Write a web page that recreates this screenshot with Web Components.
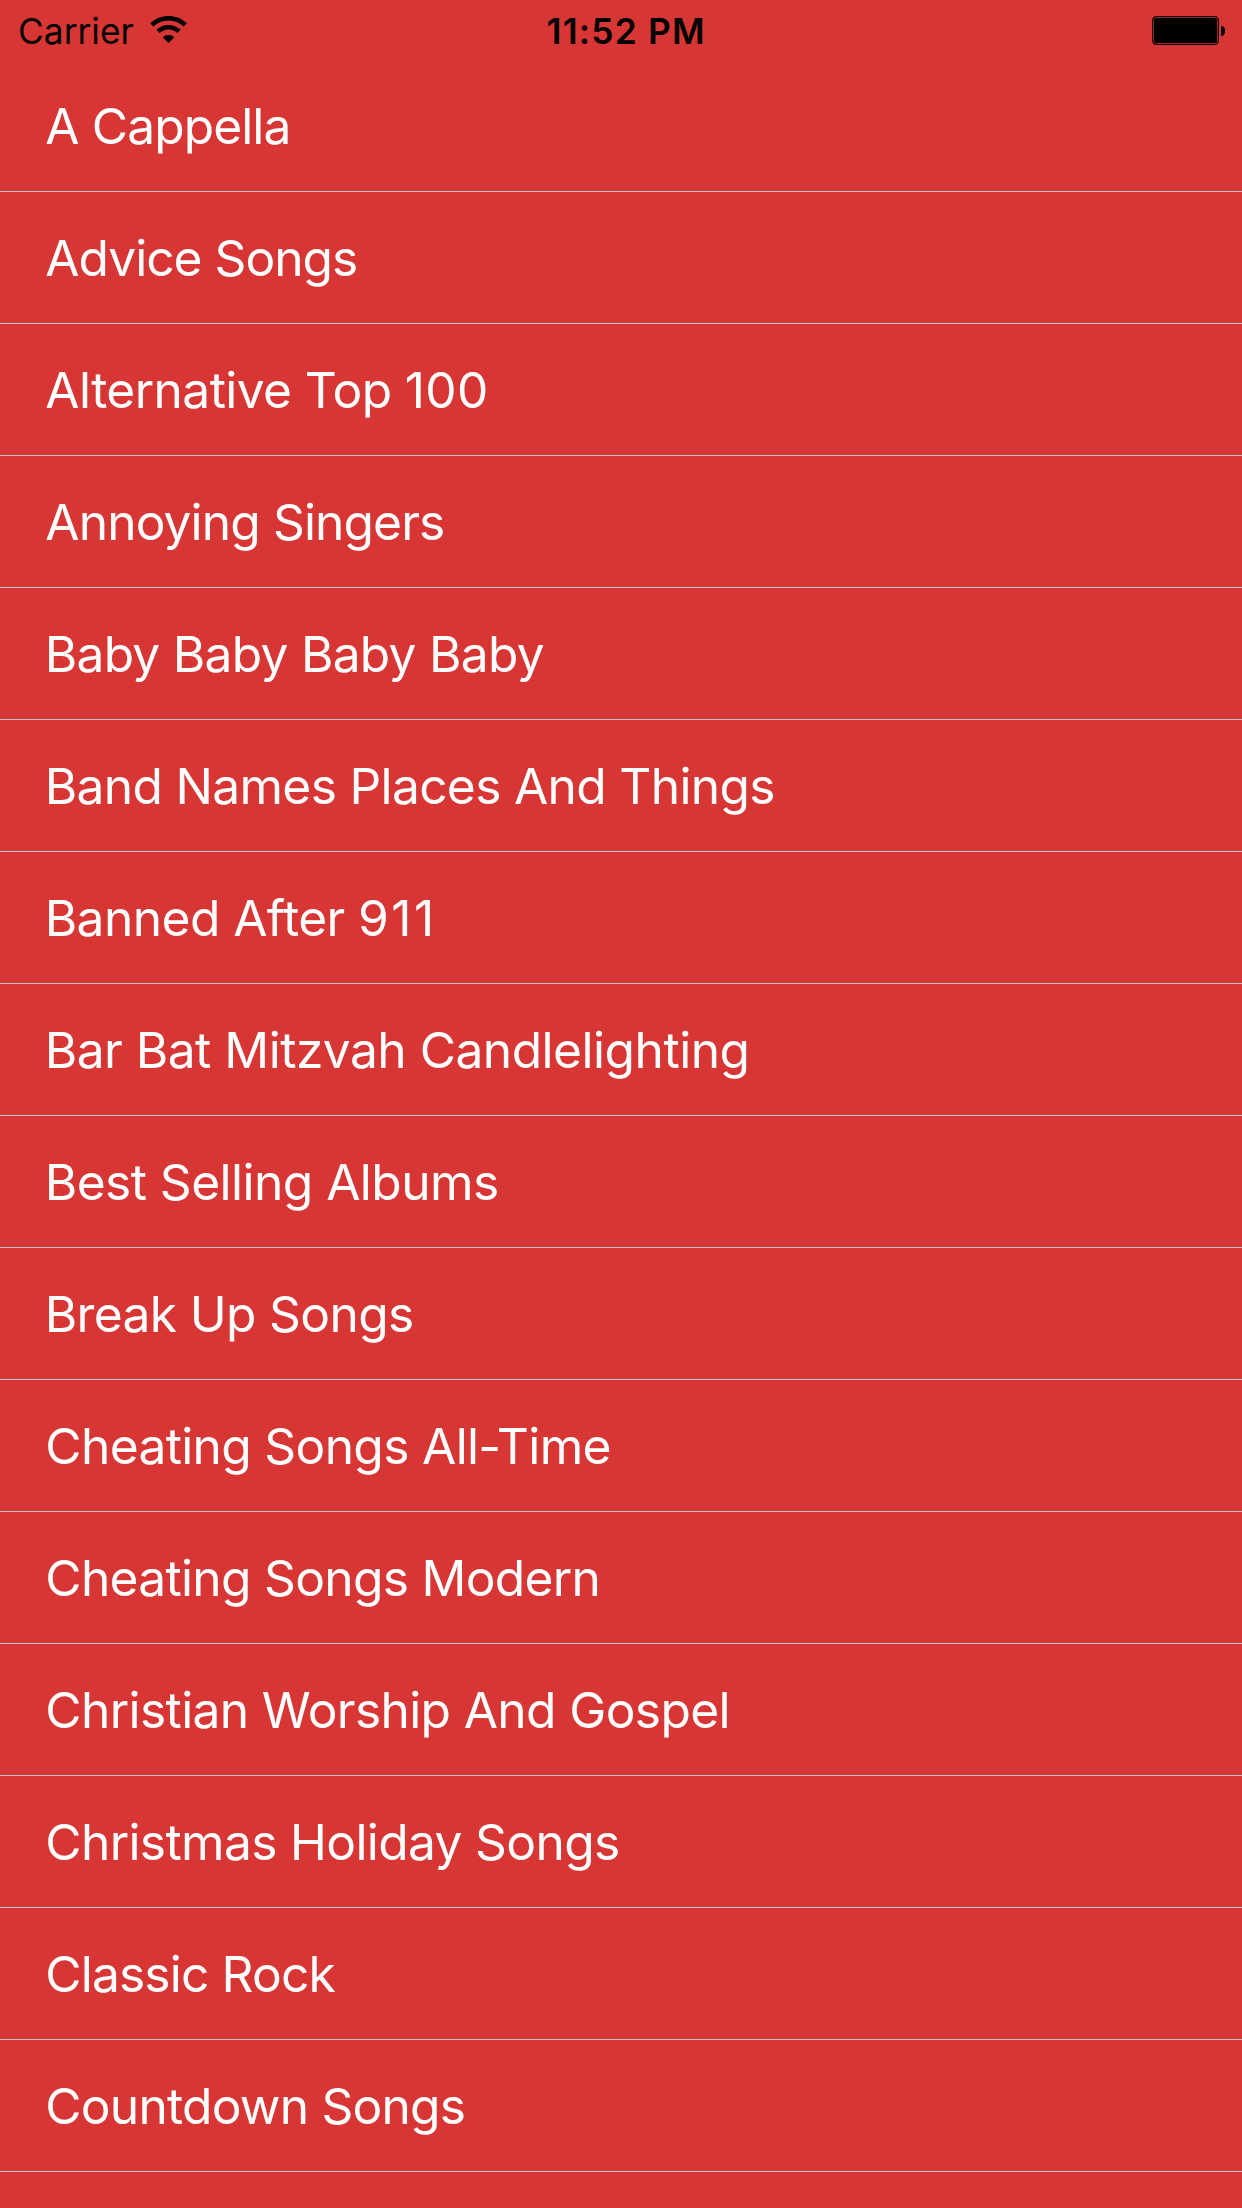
<!DOCTYPE html>
<html lang="en">
<head>
<meta charset="utf-8">
<title>Categories</title>
<style>
html,body{margin:0;height:2208px;overflow:hidden;background:#d83634}
</style>
</head>
<body>
<music-screen></music-screen>
<script>
// Text whose tracking is adjusted so that its ink spans from `start` to `end` px.
// `digits` adds extra tracking to a trailing number.
class FitText extends HTMLElement {
  connectedCallback() {
    const size = this.getAttribute('size'), weight = this.getAttribute('weight') || 400;
    const start = +this.getAttribute('start'), end = +this.getAttribute('end');
    const label = this.getAttribute('label');
    const extra = +(this.getAttribute('digits') || 0);
    const ctx = document.createElement('canvas').getContext('2d');
    ctx.font = `${weight} ${size}px Inter, sans-serif`;
    const m = ctx.measureText(label);
    const ink = m.actualBoundingBoxRight + m.actualBoundingBoxLeft;
    const tail = extra ? label.match(/\d+$/)[0] : '';
    const tracking = (end - start - ink - extra * Math.max(0, tail.length - 1)) / (label.length - 1);
    const head = label.slice(0, label.length - tail.length);
    this.attachShadow({mode: 'open'}).innerHTML = `<style>
      :host{display:block;white-space:pre;font:${weight} ${size}px/1.2 Inter,"Noto Sans",sans-serif;
        letter-spacing:${tracking.toFixed(3)}px;margin-left:${(start + m.actualBoundingBoxLeft).toFixed(2)}px}
      b{font-weight:inherit;letter-spacing:${(tracking + extra).toFixed(3)}px}
    </style><span>${head}${tail ? `<b>${tail}</b>` : ''}</span>`;
  }
}
customElements.define('fit-text', FitText);

class CategoryRow extends HTMLElement {
  connectedCallback() {
    this.attachShadow({mode: 'open'}).innerHTML = `<style>
      :host{display:flex;align-items:center;height:132px;box-sizing:border-box;
        border-bottom:1px solid #c8c7cc;color:#fff;padding-top:3px}
    </style><fit-text size="49.7" start="${this.getAttribute('start')}" end="${this.getAttribute('end')}" label="${this.getAttribute('label')}" digits="${this.getAttribute('digits')}"></fit-text>`;
  }
}
customElements.define('category-row', CategoryRow);

class WifiIcon extends HTMLElement {
  connectedCallback() {
    this.attachShadow({mode: 'open'}).innerHTML = `<style>:host{display:block;width:38px;height:28px}svg{display:block}</style>
    <svg width="38" height="28" viewBox="0 0 38 28">
      <g fill="none" stroke="#000" stroke-width="4.5">
        <path d="M1.7 8.9a24.4 24.4 0 0 1 33.6 0"/>
        <path d="M8 15.4a15.3 15.3 0 0 1 21 0"/>
      </g>
      <path d="M12.7 21.2a8.4 8.4 0 0 1 11.6 0L18.5 27Z"/>
    </svg>`;
  }
}
customElements.define('wifi-icon', WifiIcon);

class BatteryIcon extends HTMLElement {
  connectedCallback() {
    this.attachShadow({mode: 'open'}).innerHTML = `<style>:host{display:block;width:74px;height:29px}svg{display:block}</style>
    <svg width="74" height="29" viewBox="0 0 74 29">
      <rect x=".6" y=".6" width="65.800" height="27.800" rx="4" fill="none" stroke="#000" stroke-width="1.2"/>
      <rect x="1.900" y="1.900" width="63.200" height="25.200" rx="2.500"/>
      <path d="M69 10c2.600 0 4 1.800 4 5s-1.400 5-4 5Z"/>
    </svg>`;
  }
}
customElements.define('battery-icon', BatteryIcon);

class StatusBar extends HTMLElement {
  connectedCallback() {
    this.attachShadow({mode: 'open'}).innerHTML = `<style>
      :host{display:grid;grid-template-columns:548px 1fr auto;height:60px;color:#000;align-items:start}
      .left{display:grid;grid-template-columns:150px auto;justify-content:start;align-items:start}
      fit-text{margin-top:11px}
      wifi-icon{margin-top:16px}
      battery-icon{margin:16px 16px 0 0}
    </style>
    <div class="left"><fit-text size="35.300" start="20" end="133.500" label="Carrier"></fit-text><wifi-icon></wifi-icon></div>
    <fit-text size="35.300" weight="600" start="-.5" end="154" label="11:52 PM"></fit-text>
    <battery-icon></battery-icon>`;
  }
}
customElements.define('status-bar', StatusBar);

class MusicScreen extends HTMLElement {
  connectedCallback() {
    const rows = [
      ['A Cappella', 46.3, 288.5], ['Advice Songs', 46.3, 356], ['Alternative Top 100', 46.3, 486, .9],
      ['Annoying Singers', 46.3, 443], ['Baby Baby Baby Baby', 48.7, 543.7],
      ['Band Names Places And Things', 48.7, 773.3], ['Banned After 911', 48.7, 430, 3],
      ['Bar Bat Mitzvah Candlelighting', 48.7, 746.5], ['Best Selling Albums', 48.7, 497],
      ['Break Up Songs', 48.7, 412], ['Cheating Songs All-Time', 47.3, 609.5],
      ['Cheating Songs Modern', 47.3, 597.5], ['Christian Worship And Gospel', 47.3, 727.5],
      ['Christmas Holiday Songs', 47.3, 618], ['Classic Rock', 47.3, 335.5], ['Countdown Songs', 47.3, 463.8]
    ];
    this.attachShadow({mode: 'open'}).innerHTML = `<style>
      :host{display:flex;flex-direction:column;width:1242px;height:2208px;background:#d83634;overflow:hidden}
    </style><status-bar></status-bar>` +
      rows.map(([t, s, e, d = 0]) => `<category-row label="${t}" start="${s}" end="${e}" digits="${d}"></category-row>`).join('');
  }
}
customElements.define('music-screen', MusicScreen);
</script>
</body>
</html>
